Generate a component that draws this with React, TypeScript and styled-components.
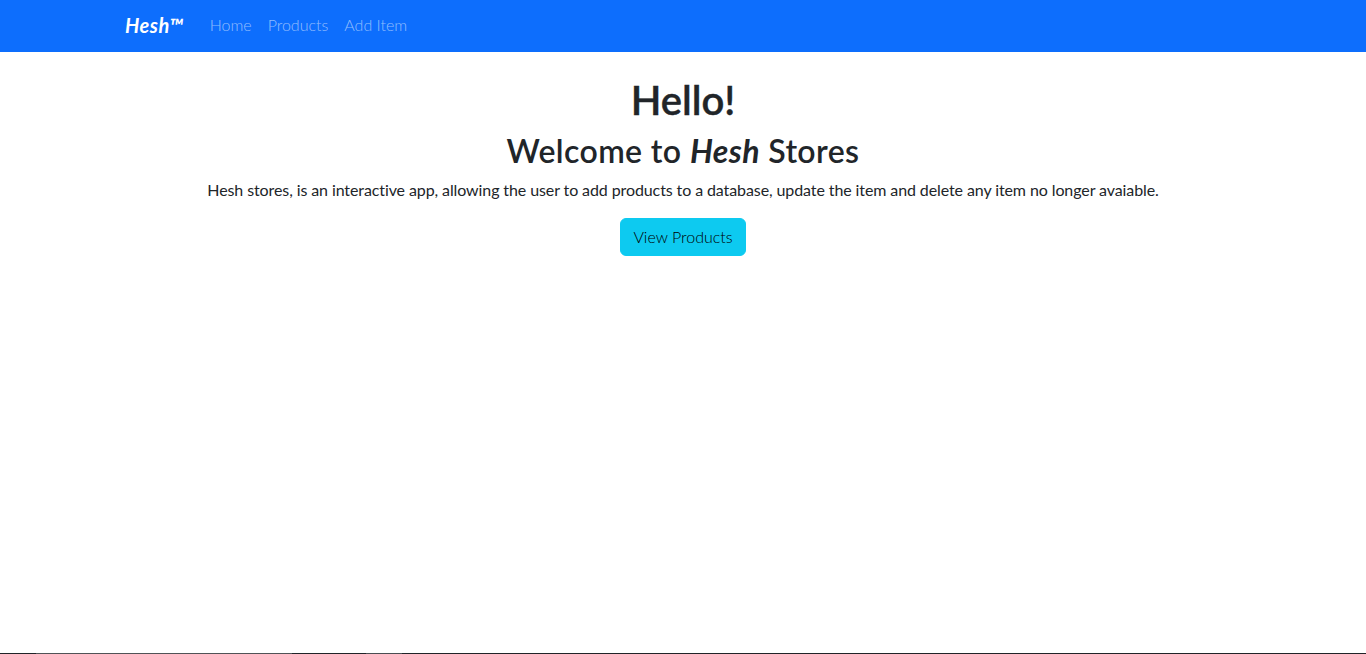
import React from "react";
import styled, { createGlobalStyle } from "styled-components";

const GlobalStyle = createGlobalStyle`
  * { box-sizing: border-box; }
  html, body { margin: 0; padding: 0; }
  body {
    font-family: Lato, "Open Sans", sans-serif;
    font-size: 16px;
    line-height: 1.5;
    color: #212529;
    background: #fff;
  }
`;

const Navbar = styled.nav`
  background: #0d6efd;
  height: 52px;
  padding-bottom: 3px;
  display: flex;
  align-items: center;
`;

const NavContainer = styled.div`
  width: 1140px;
  margin: 0 auto;
  padding: 0 12px;
  display: flex;
  align-items: center;
`;

const Brand = styled.a`
  font-size: 20px;
  font-weight: 700;
  font-style: italic;
  letter-spacing: 0.5px;
  color: #fff;
  text-decoration: none;
  margin-right: 18px;
  line-height: 30px;
`;

const NavLinks = styled.div`
  display: flex;
`;

const NavLink = styled.a`
  color: rgba(255, 255, 255, 0.55);
  text-decoration: none;
  padding: 8px;
  font-size: 16px;
  font-weight: 300;
`;

const Main = styled.main`
  text-align: center;
  padding-top: 24px;
`;

const Title = styled.h1`
  font-size: 40px;
  font-weight: 600;
  -webkit-text-stroke: 0.4px #212529;
  line-height: 1.2;
  margin: 0 0 8px;
`;

const Subtitle = styled.h2`
  font-size: 32px;
  font-weight: 600;
  letter-spacing: 0.4px;
  line-height: 1.2;
  margin: 0 0 8px;
`;

const BrandWord = styled.em`
  font-weight: 700;
`;

const Lead = styled.p`
  margin: 0 0 16px;
  font-weight: 400;
  letter-spacing: -0.1px;
`;

const InfoButton = styled.button`
  font-family: inherit;
  font-size: 16px;
  line-height: 1.5;
  font-weight: 300;
  color: #000;
  background: #0dcaf0;
  border: 1px solid #0dcaf0;
  border-radius: 6px;
  padding: 6px 12px;
  cursor: pointer;
`;

const BottomEdge = styled.div`
  position: fixed;
  left: 0;
  right: 0;
  bottom: 0;
  height: 1px;
  background: linear-gradient(
    to right,
    #202428 0 36px,
    #505356 36px 292px,
    #202428 292px 366px,
    #4a4e52 366px 402px,
    #202428 402px 100%
  );
`;

export default function App() {
  return (
    <>
      <GlobalStyle />
      <Navbar>
        <NavContainer>
          <Brand href="#">Hesh™</Brand>
          <NavLinks>
            <NavLink href="#">Home</NavLink>
            <NavLink href="#">Products</NavLink>
            <NavLink href="#">Add Item</NavLink>
          </NavLinks>
        </NavContainer>
      </Navbar>
      <Main>
        <Title>Hello!</Title>
        <Subtitle>
          Welcome to <BrandWord>Hesh</BrandWord> Stores
        </Subtitle>
        <Lead>
          Hesh stores, is an interactive app, allowing the user to add products to a database, update the item and delete any item no longer avaiable.
        </Lead>
        <InfoButton>View Products</InfoButton>
      </Main>
      <BottomEdge />
    </>
  );
}
